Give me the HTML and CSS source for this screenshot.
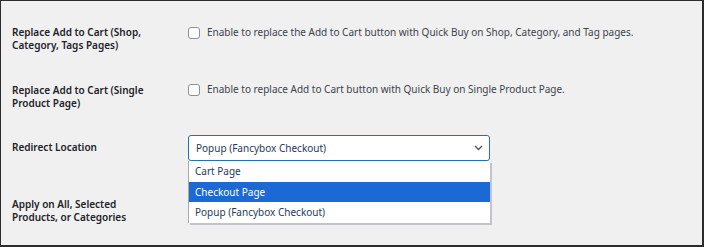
FILE: index.html
```html
<!DOCTYPE html>
<html lang="en">
<head>
    <meta charset="UTF-8">
    <meta name="viewport" content="width=device-width, initial-scale=1.0">
    <title>Quick Buy Settings</title>
    <link rel="stylesheet" href="styles.css">
</head>
<body>
    <div class="settings">
        <div class="row">
            <div class="row-label">Replace Add to Cart (Shop, Category, Tags Pages)</div>
            <div class="row-field">
                <label class="check">
                    <span class="box"></span>
                    Enable to replace the Add to Cart button with Quick Buy on Shop, Category, and Tag pages.
                </label>
            </div>
        </div>

        <div class="row row-second">
            <div class="row-label">Replace Add to Cart (Single Product Page)</div>
            <div class="row-field">
                <label class="check">
                    <span class="box"></span>
                    Enable to replace Add to Cart button with Quick Buy on Single Product Page.
                </label>
            </div>
        </div>

        <div class="row row-select">
            <div class="row-label">Redirect Location</div>
            <div class="row-field">
                <div class="select-wrap">
                    <div class="select">
                        <span>Popup (Fancybox Checkout)</span>
                        <svg class="chevron" width="9" height="6" viewBox="0 0 9 6">
                            <path d="M1 1 L4.5 4.5 L8 1" fill="none" stroke="#50575e" stroke-width="1.4"/>
                        </svg>
                    </div>
                    <ul class="options">
                        <li>Cart Page</li>
                        <li class="active">Checkout Page</li>
                        <li>Popup (Fancybox Checkout)</li>
                    </ul>
                </div>
            </div>
        </div>

        <div class="row">
            <div class="row-label">Apply on All, Selected Products, or Categories</div>
            <div class="row-field"></div>
        </div>
    </div>
</body>
</html>
```

FILE: styles.css
```css
* {
    box-sizing: border-box;
}
body {
    margin: 0;
    font-family: "Noto Sans", "Open Sans", sans-serif;
    font-size: 10px;
    line-height: 13px;
    color: #1d2327;
}
.settings {
    width: 704px;
    height: 247px;
    background: #f0f0f1;
    border-style: solid;
    border-color: #2c2c2c;
    border-width: 1px 2px 2px 1px;
    padding: 10px 0 0 11px;
    overflow: hidden;
}
.row {
    display: grid;
    grid-template-columns: 176px 1fr;
    height: 57px;
}
.row-label {
    font-weight: 600;
    width: 140px;
    padding-top: 15px;
}
.row-field {
    padding-top: 15px;
}
.row-second .row-label {
    padding-top: 16px;
}
.check {
    display: flex;
    align-items: center;
    gap: 7px;
    color: #3c434a;
}
.box {
    width: 12px;
    height: 12px;
    border: 1px solid #8c8f94;
    border-radius: 3px;
    background: #fff;
    flex: none;
}
.row-select {
    height: 58px;
}
.row-select .row-label {
    padding-top: 16px;
}
.row-select .row-field {
    padding-top: 10px;
}
.select-wrap {
    position: relative;
    width: 302px;
}
.select {
    height: 26px;
    border: 1px solid #2271b1;
    border-radius: 3px;
    background: #fff;
    display: flex;
    align-items: center;
    justify-content: space-between;
    padding: 0 6px 0 7px;
    color: #1f3a5a;
}
.options {
    position: absolute;
    top: 26px;
    left: 0;
    width: 302px;
    margin: 0;
    padding: 0;
    list-style: none;
    background: #fff;
    border-left: 1px solid #a7aaad;
    box-shadow: 2px 2px 0 #c3c4c7;
    color: #1f3a5a;
}
.options li {
    height: 20.5px;
    line-height: 20px;
    padding-left: 6px;
}
.options li.active {
    background: #1a69d4;
    color: #fff;
}
```
